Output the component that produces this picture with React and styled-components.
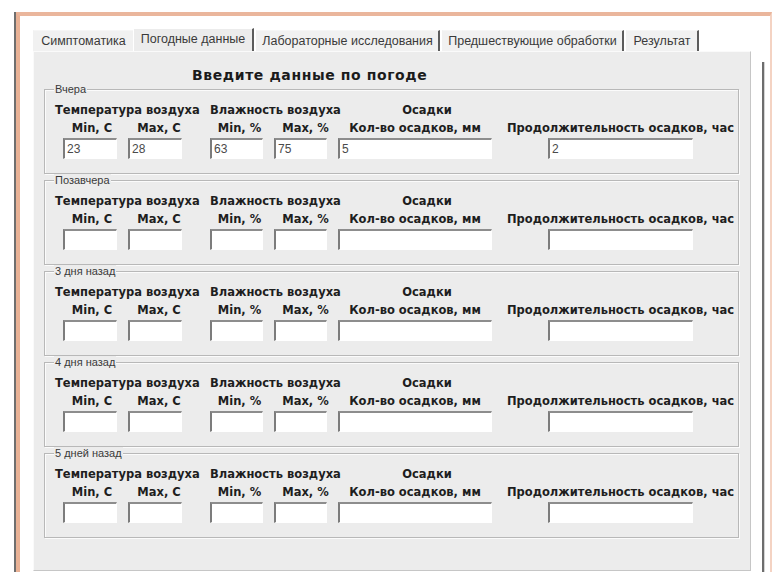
import React from 'react';
import styled, {createGlobalStyle} from 'styled-components';

const GlobalStyle = createGlobalStyle`
  html, body {
    margin: 0;
    padding: 0;
    background: #ffffff;
  }
  body {
    font-family: "Liberation Sans", Arial, sans-serif;
  }
`;

//tab captions, widths follow the old form
const tabs = [
  {title: 'Симптоматика', w: 100},
  {title: 'Погодные данные', w: 121, active: true, sep: true},
  {title: 'Лабораторные исследования', w: 184, sep: true},
  {title: 'Предшествующие обработки', w: 182, sep: true},
  {title: 'Результат', w: 73, sep: true}
];

//input columns: left margin, width, label nudge
const cols = [
  {label: 'Min, C', ml: 8, w: 54, dx: 2},
  {label: 'Max, C', ml: 11, w: 54, dx: 4},
  {label: 'Min, %', ml: 28, w: 53, dx: 3},
  {label: 'Max, %', ml: 11, w: 53, dx: 5},
  {label: 'Кол-во осадков, мм', ml: 11, w: 154, dx: 0},
  {label: 'Продолжительность осадков, час', ml: 56, w: 145, dx: 0}
];

const days = [
  {caption: 'Вчера', values: ['23', '28', '63', '75', '5', '2']},
  {caption: 'Позавчера', values: []},
  {caption: '3 дня назад', values: []},
  {caption: '4 дня назад', values: []},
  {caption: '5 дней назад', values: []}
];

function DayGroup({caption, values}) {
  return (
    <Group>
      <Caption>{caption}</Caption>
      <HeadRow>
        <Head $w={155}>Температура воздуха</Head>
        <Head $w={160}>Влажность воздуха</Head>
        <Head $w={114} $center>Осадки</Head>
      </HeadRow>
      <Columns>
        {cols.map((c, i) => (
          <ColLabel key={i} $ml={c.ml} $w={c.w} $dx={c.dx}>{c.label}</ColLabel>
        ))}
      </Columns>
      <InputRow>
        {cols.map((c, i) => (
          <Field key={i} $ml={c.ml} $w={c.w} value={values[i] || ''} readOnly/>
        ))}
      </InputRow>
    </Group>
  );
}

export default function App() {
  return (
    <Screen>
      <GlobalStyle/>
      <Frame>
        <Window>
          <TabControl>
            <TabStrip>
              {tabs.map((t, i) => (
                <Tab key={i} $w={t.w} $active={t.active} $sep={t.sep}>{t.title}</Tab>
              ))}
            </TabStrip>
            <Panel>
              <Title>Введите данные по погоде</Title>
              <Groups>
                {days.map((d, i) => <DayGroup key={i} {...d}/>)}
              </Groups>
            </Panel>
          </TabControl>
          <ScrollEdge/>
        </Window>
      </Frame>
    </Screen>
  );
}

//Style

const Screen = styled.div`
  width: 775px;
  height: 572px;
  overflow: hidden;
  padding: 11px 0 0 14px;
  box-sizing: border-box;
  background: #ffffff;
`;

const Frame = styled.div`
  width: 758px;
  height: 600px;
  border-left: 2px solid #6f6f6f;
  box-sizing: border-box;
`;

const Window = styled.div`
  display: flex;
  margin-top: 1px;
  height: 100%;
  border-top: 4px solid #eab69c;
  border-left: 4px solid #e9b296;
  border-right: 2px solid #f4d3c3;
  padding: 12px 0 0 13px;
  box-sizing: border-box;
  background: #ffffff;
`;

const TabControl = styled.div`
  width: 718px;
  display: flex;
  flex-direction: column;
`;

const TabStrip = styled.div`
  display: flex;
  align-items: flex-end;
  height: 23px;
`;

const Tab = styled.div`
  width: ${props => props.$w}px;
  height: ${props => props.$active ? '23px' : '21px'};
  box-sizing: border-box;
  display: flex;
  align-items: center;
  justify-content: center;
  padding-bottom: ${props => props.$active ? '3px' : '0'};
  background: ${props => props.$active ? '#ececec' : '#f1f1f1'};
  border-top: 1px solid ${props => props.$active ? '#ffffff' : '#f6f6f6'};
  border-left: 1px solid ${props => props.$active ? '#ffffff' : 'transparent'};
  border-right: ${props => props.$sep ? '2px solid #5c5c5c' : '0'};
  margin-right: ${props => props.$sep ? '2px' : '0'};
  font-family: "Liberation Sans", Arial, sans-serif;
  font-size: 12.5px;
  color: #3a3a3a;
  white-space: nowrap;
`;

const Panel = styled.div`
  height: 520px;
  box-sizing: border-box;
  background: #ececec;
  border-top: 1px solid #fafafa;
  border-left: 1px solid #fafafa;
  border-right: 1px solid #c6c6c6;
  border-bottom: 1px solid #c6c6c6;
  padding: 15px 11px 0 10px;
`;

const Title = styled.div`
  margin-left: 148px;
  height: 16px;
  line-height: 16px;
  font-family: "DejaVu Sans", Verdana, sans-serif;
  font-weight: bold;
  font-size: 14px;
  letter-spacing: 0.6px;
  color: #1b1b1b;
  white-space: nowrap;
`;

const Groups = styled.div`
  display: flex;
  flex-direction: column;
`;

const Group = styled.fieldset`
  margin: 0;
  min-width: 0;
  padding: 8px 0 14px 10px;
  border: 1px solid #b8b8b8;
  box-shadow: inset 1px 1px 0 #fbfbfb, 1px 1px 0 #fbfbfb;
`;

const Caption = styled.legend`
  padding: 0 1px;
  margin-left: -1px;
  height: 12px;
  line-height: 12px;
  font-family: "Liberation Sans", Arial, sans-serif;
  font-size: 11px;
  color: #3a3a3a;
  background: #ececec;
`;

const HeadRow = styled.div`
  display: flex;
  height: 14px;
  line-height: 14px;
`;

const Head = styled.div`
  width: ${props => props.$w}px;
  flex: none;
  text-align: ${props => props.$center ? 'center' : 'left'};
  font-family: "DejaVu Sans", Verdana, sans-serif;
  font-weight: bold;
  font-size: 11.5px;
  color: #1e1e1e;
  white-space: nowrap;
`;

const Columns = styled.div`
  display: flex;
  margin-top: 4px;
  height: 14px;
  line-height: 14px;
`;

const ColLabel = styled.div`
  flex: none;
  width: ${props => props.$w}px;
  margin-left: ${props => props.$ml}px;
  padding-left: ${props => props.$dx * 2}px;
  box-sizing: border-box;
  display: flex;
  justify-content: center;
  font-family: "DejaVu Sans", Verdana, sans-serif;
  font-weight: bold;
  font-size: 11.5px;
  color: #1e1e1e;
  white-space: nowrap;
`;

const InputRow = styled.div`
  display: flex;
  margin-top: 3px;
`;

const Field = styled.input`
  flex: none;
  width: ${props => props.$w}px;
  margin-left: ${props => props.$ml}px;
  height: 21px;
  box-sizing: border-box;
  padding: 0 2px;
  border-top: 2px solid #8d8d8d;
  border-left: 2px solid #7c7c7c;
  border-right: 1px solid #ffffff;
  border-bottom: 1px solid #ffffff;
  background: #ffffff;
  font-family: "Liberation Sans", Arial, sans-serif;
  font-size: 12px;
  color: #4a4a4a;
  outline: none;
`;

const ScrollEdge = styled.div`
  margin: 34px 0 0 11px;
  width: 2px;
  background: #6d6d6d;
  box-shadow: 1px 0 0 #d4d4d4;
`;
